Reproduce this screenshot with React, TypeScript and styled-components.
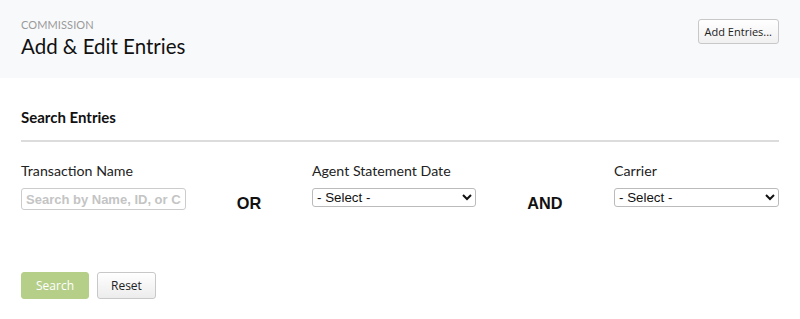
import React from 'react';
import styled, { createGlobalStyle } from 'styled-components';

const GlobalStyle = createGlobalStyle`
  html, body {
    margin: 0;
    padding: 0;
    background: #ffffff;
    font-family: Lato, "Liberation Sans", Arial, sans-serif;
    color: #111;
  }
`;

const Header = styled.header`
  height: 78px;
  box-sizing: border-box;
  background: #f8f9fb;
  padding: 18px 21px 0 21px;
  display: flex;
  justify-content: space-between;
  align-items: flex-start;
`;

const Crumb = styled.div`
  font-size: 11px;
  line-height: 13px;
  color: #9a9a9a;
  letter-spacing: 0.1px;
`;

const Title = styled.h1`
  margin: 2px 0 0 0;
  font-size: 20.5px;
  line-height: 26px;
  font-weight: 400;
  color: #111;
`;

const GhostButton = styled.button`
  margin-top: 1px;
  height: 25px;
  padding: 0 6px;
  font-family: "Open Sans", "Liberation Sans", sans-serif;
  font-size: 11px;
  color: #222;
  background: linear-gradient(#ffffff, #f0f0f0);
  border: 1px solid #c8c8c8;
  border-radius: 3px;
  cursor: pointer;
`;

const Body = styled.main`
  padding: 28px 21px 0 21px;
`;

const SectionTitle = styled.h2`
  margin: 0;
  font-size: 15px;
  line-height: 22px;
  font-weight: 700;
  padding-bottom: 12px;
  border-bottom: 2px solid #dcdcdc;
`;

const FilterGrid = styled.div`
  display: grid;
  grid-template-columns: 165px 126px 164px 138px 165px;
  margin-top: 19px;
  align-items: start;
`;

const Field = styled.div`
  display: flex;
  flex-direction: column;
`;

const Label = styled.label`
  font-size: 14.2px;
  line-height: 20px;
  color: #222;
  margin-bottom: 7px;
`;

const TextInput = styled.input`
  box-sizing: border-box;
  width: 165px;
  height: 22px;
  border: 1px solid #cccccc;
  border-radius: 3px;
  padding: 0 4px;
  font-family: "Liberation Sans", Arial, sans-serif;
  font-size: 13px;
  font-weight: 700;
  &::placeholder {
    color: #c4c4c4;
  }
`;

const Select = styled.select`
  box-sizing: border-box;
  width: 100%;
  height: 19px;
  font-family: "Liberation Sans", Arial, sans-serif;
  font-size: 13.33px;
  border: 1px solid #bbbbbb;
  border-radius: 3px;
  background: #fff;
  color: #111;
`;

const Conj = styled.div`
  text-align: center;
  padding-top: 33px;
  line-height: 18px;
  font-family: "Liberation Sans", Arial, sans-serif;
  font-weight: 700;
  font-size: 16.3px;
  color: #111;
`;

const Actions = styled.div`
  display: flex;
  gap: 8px;
  margin-top: 60px;
`;

const Button = styled.button<{ $primary?: boolean }>`
  height: 27px;
  padding: 0 ${(p) => (p.$primary ? '14px' : '13px')};
  font-family: "Open Sans", "Liberation Sans", sans-serif;
  font-size: 12px;
  border-radius: 3px;
  cursor: pointer;
  color: ${(p) => (p.$primary ? '#ffffff' : '#222')};
  background: ${(p) => (p.$primary ? '#b5cf89' : 'linear-gradient(#ffffff, #ececec)')};
  border: 1px solid ${(p) => (p.$primary ? '#b5cf89' : '#c8c8c8')};
`;

export default function App() {
  return (
    <>
      <GlobalStyle />
      <Header>
        <div>
          <Crumb>COMMISSION</Crumb>
          <Title>Add &amp; Edit Entries</Title>
        </div>
        <GhostButton>Add Entries...</GhostButton>
      </Header>
      <Body>
        <SectionTitle>Search Entries</SectionTitle>
        <FilterGrid>
          <Field>
            <Label>Transaction Name</Label>
            <TextInput placeholder="Search by Name, ID, or Carrier" />
          </Field>
          <Conj>OR</Conj>
          <Field>
            <Label>Agent Statement Date</Label>
            <Select defaultValue="">
              <option value="">- Select -</option>
            </Select>
          </Field>
          <Conj>AND</Conj>
          <Field>
            <Label>Carrier</Label>
            <Select defaultValue="">
              <option value="">- Select -</option>
            </Select>
          </Field>
        </FilterGrid>
        <Actions>
          <Button $primary>Search</Button>
          <Button>Reset</Button>
        </Actions>
      </Body>
    </>
  );
}
